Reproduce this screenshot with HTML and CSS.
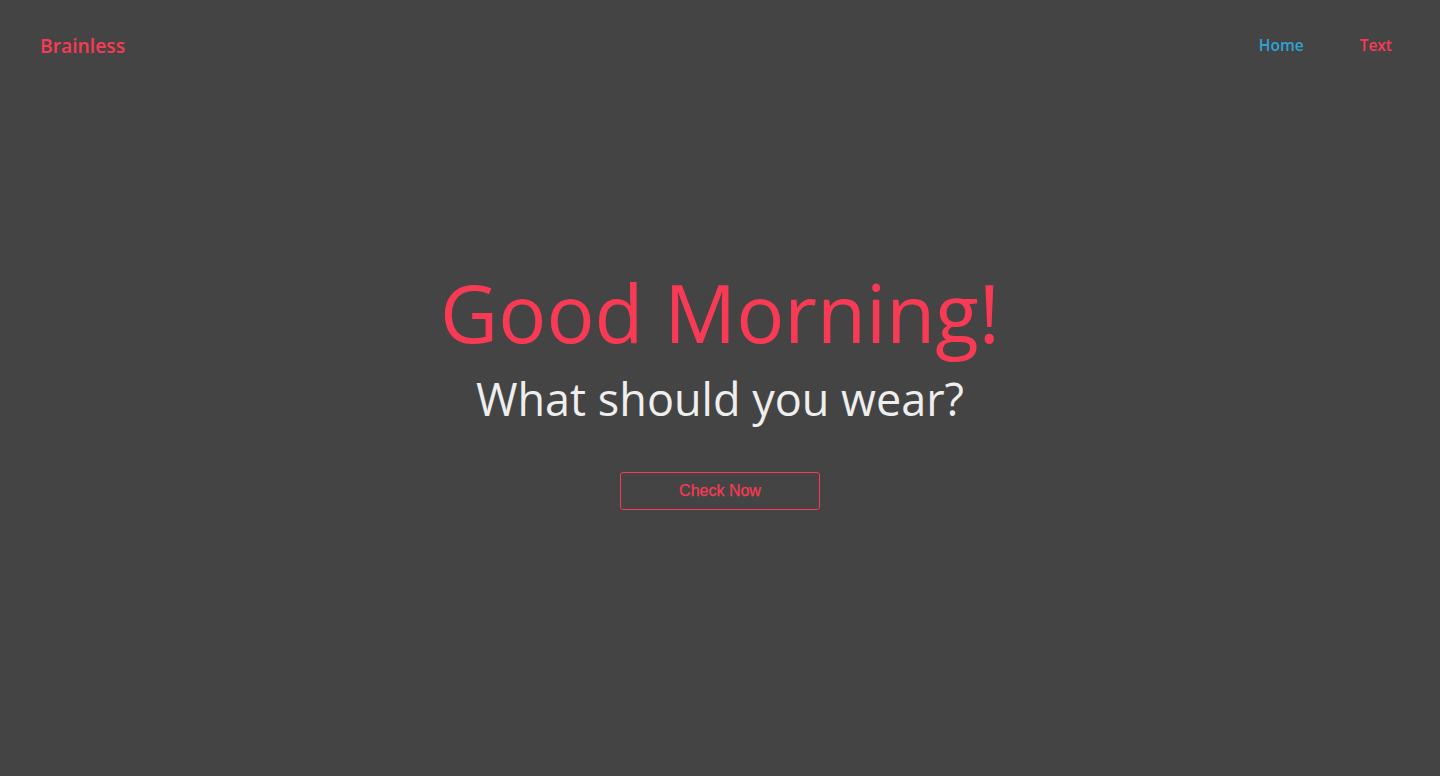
FILE: index.html
```html
<!DOCTYPE html>
<html lang="en">
<head>
<meta charset="utf-8">
<title>Brainless</title>
<link rel="stylesheet" href="styles.css">
</head>
<body>
<div class="page">
  <header class="topbar">
    <a class="brand" href="#">Brainless</a>
    <nav class="nav">
      <a class="nav-link nav-home" href="#">Home</a>
      <a class="nav-link nav-text" href="#">Text</a>
    </nav>
  </header>
  <main class="hero">
    <h1 class="hero-title">Good Morning!</h1>
    <h2 class="hero-sub">What should you wear?</h2>
    <a class="hero-btn" href="#">Check Now</a>
  </main>
</div>
</body>
</html>
```
FILE: styles.css
```css
html, body {
  margin: 0;
  padding: 0;
  height: 100%;
}
body {
  background: #444444;
  font-family: "Open Sans", "Liberation Sans", sans-serif;
}
.page {
  height: 100vh;
  display: flex;
  flex-direction: column;
}
.topbar {
  display: flex;
  justify-content: space-between;
  align-items: center;
  padding: 30px 48px 0 40px;
  height: 30px;
}
.brand {
  color: #f93a55;
  font-size: 19.3px;
  font-weight: 600;
  text-decoration: none;
}
.nav {
  display: flex;
  gap: 56px;
}
.nav-link {
  font-size: 15.5px;
  font-weight: 600;
  text-decoration: none;
}
.nav-home { color: #2ea3d6; }
.nav-text { color: #f93a55; }
.hero {
  flex: 1;
  display: flex;
  flex-direction: column;
  align-items: center;
  justify-content: center;
  padding-bottom: 58px;
}
.hero-title {
  margin: 0;
  color: #f93a55;
  font-size: 80px;
  font-weight: 400;
  line-height: 88px;
}
.hero-sub {
  margin: 16px 0 0;
  color: #eeeeee;
  font-size: 45px;
  font-weight: 400;
  line-height: 54px;
}
.hero-btn {
  margin-top: 46px;
  width: 198px;
  height: 36px;
  border: 1px solid #f93a55;
  border-radius: 3px;
  display: flex;
  align-items: center;
  justify-content: center;
  color: #f93a55;
  font-family: "Liberation Sans", Arial, sans-serif;
  font-size: 16px;
  -webkit-text-stroke: 0.25px #f93a55;
  text-decoration: none;
}
```
